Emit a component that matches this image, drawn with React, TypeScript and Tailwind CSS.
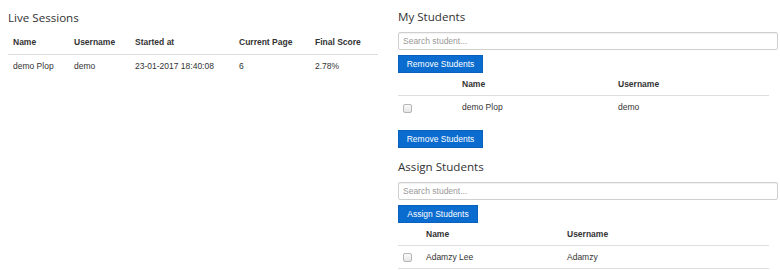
import React from "react";

const Check = ({ mt }: { mt: string }) => (
  <div
    className={`w-[9px] h-[9px] rounded-[2px] border border-[#b5b5b5] bg-gradient-to-b from-[#fafafa] to-[#e6e6e6] ${mt}`}
  />
);

const Heading = ({ children, mt }: { children: React.ReactNode; mt: string }) => (
  <h2
    className={`${mt} h-[14px] leading-[14px] text-[11.6px] text-[#333] font-normal`}
    style={{ fontFamily: '"Open Sans", sans-serif' }}
  >
    {children}
  </h2>
);

const Search = ({ mt }: { mt: string }) => (
  <div
    className={`${mt} h-[18px] w-[380px] border border-[#cfcfcf] rounded-[2px] flex items-center pl-[4px] text-[8.5px] text-[#999] shadow-[inset_0_1px_1px_rgba(0,0,0,0.06)]`}
  >
    Search student...
  </div>
);

const Btn = ({ children, w, mt }: { children: React.ReactNode; w: string; mt: string }) => (
  <div
    className={`${mt} ${w} h-[18px] bg-[#0a6ccf] border border-[#0862bd] text-white text-[8.5px] flex items-center justify-center`}
  >
    {children}
  </div>
);

export default function App() {
  return (
    <div
      className="w-[780px] h-[270px] bg-white overflow-hidden flex text-[#333]"
      style={{ fontFamily: '"Liberation Sans", Arial, sans-serif' }}
    >
      {/* Left column */}
      <div className="ml-[8px] w-[380px] flex flex-col">
        <Heading mt="mt-[10.5px]">Live Sessions</Heading>
        <div className="w-[370px] text-[8.5px] leading-[11px]">
          <div className="flex h-[30px] pt-[12.5px] border-b border-[#dddddd] font-bold">
            <div className="w-[61px] pl-[5px]">Name</div>
            <div className="w-[61px] pl-[5px]">Username</div>
            <div className="w-[104px] pl-[5px]">Started at</div>
            <div className="w-[76px] pl-[5px]">Current Page</div>
            <div className="w-[68px] pl-[5px]">Final Score</div>
          </div>
          <div className="flex h-[24px] pt-[6px]">
            <div className="w-[61px] pl-[5px]">demo Plop</div>
            <div className="w-[61px] pl-[5px]">demo</div>
            <div className="w-[104px] pl-[5px]">23-01-2017 18:40:08</div>
            <div className="w-[76px] pl-[5px]">6</div>
            <div className="w-[68px] pl-[5px]">2.78%</div>
          </div>
        </div>
      </div>

      {/* Right column */}
      <div className="ml-[10px] w-[380px] flex flex-col">
        <Heading mt="mt-[10px]">My Students</Heading>
        <Search mt="mt-[8px]" />
        <Btn w="w-[85px]" mt="mt-[5px]">Remove Students</Btn>
        <div className="w-[371px] text-[8.5px] leading-[11px]">
          <div className="flex h-[23px] pt-[5.5px] border-b border-[#dddddd] font-bold">
            <div className="w-[59px] pl-[5px]" />
            <div className="w-[156px] pl-[5px]">Name</div>
            <div className="w-[156px] pl-[5px]">Username</div>
          </div>
          <div className="flex h-[22px] pt-[5.5px]">
            <div className="w-[59px] pl-[5px]">
              <Check mt="mt-[2.5px]" />
            </div>
            <div className="w-[156px] pl-[5px]">demo Plop</div>
            <div className="w-[156px] pl-[5px]">demo</div>
          </div>
        </div>
        <Btn w="w-[85px]" mt="mt-[12px]">Remove Students</Btn>
        <Heading mt="mt-[11.5px]">Assign Students</Heading>
        <Search mt="mt-[8.5px]" />
        <Btn w="w-[80px]" mt="mt-[5px]">Assign Students</Btn>
        <div className="w-[371px] text-[8.5px] leading-[11px]">
          <div className="flex h-[23px] pt-[5.5px] border-b border-[#dddddd] font-bold">
            <div className="w-[23px] pl-[5px]" />
            <div className="w-[141px] pl-[5px]">Name</div>
            <div className="w-[207px] pl-[5px]">Username</div>
          </div>
          <div className="flex h-[23px] pt-[5.5px] border-b border-[#dddddd]">
            <div className="w-[23px] pl-[5px]">
              <Check mt="mt-[1.5px]" />
            </div>
            <div className="w-[141px] pl-[5px]">Adamzy Lee</div>
            <div className="w-[207px] pl-[5px]">Adamzy</div>
          </div>
        </div>
      </div>
    </div>
  );
}
